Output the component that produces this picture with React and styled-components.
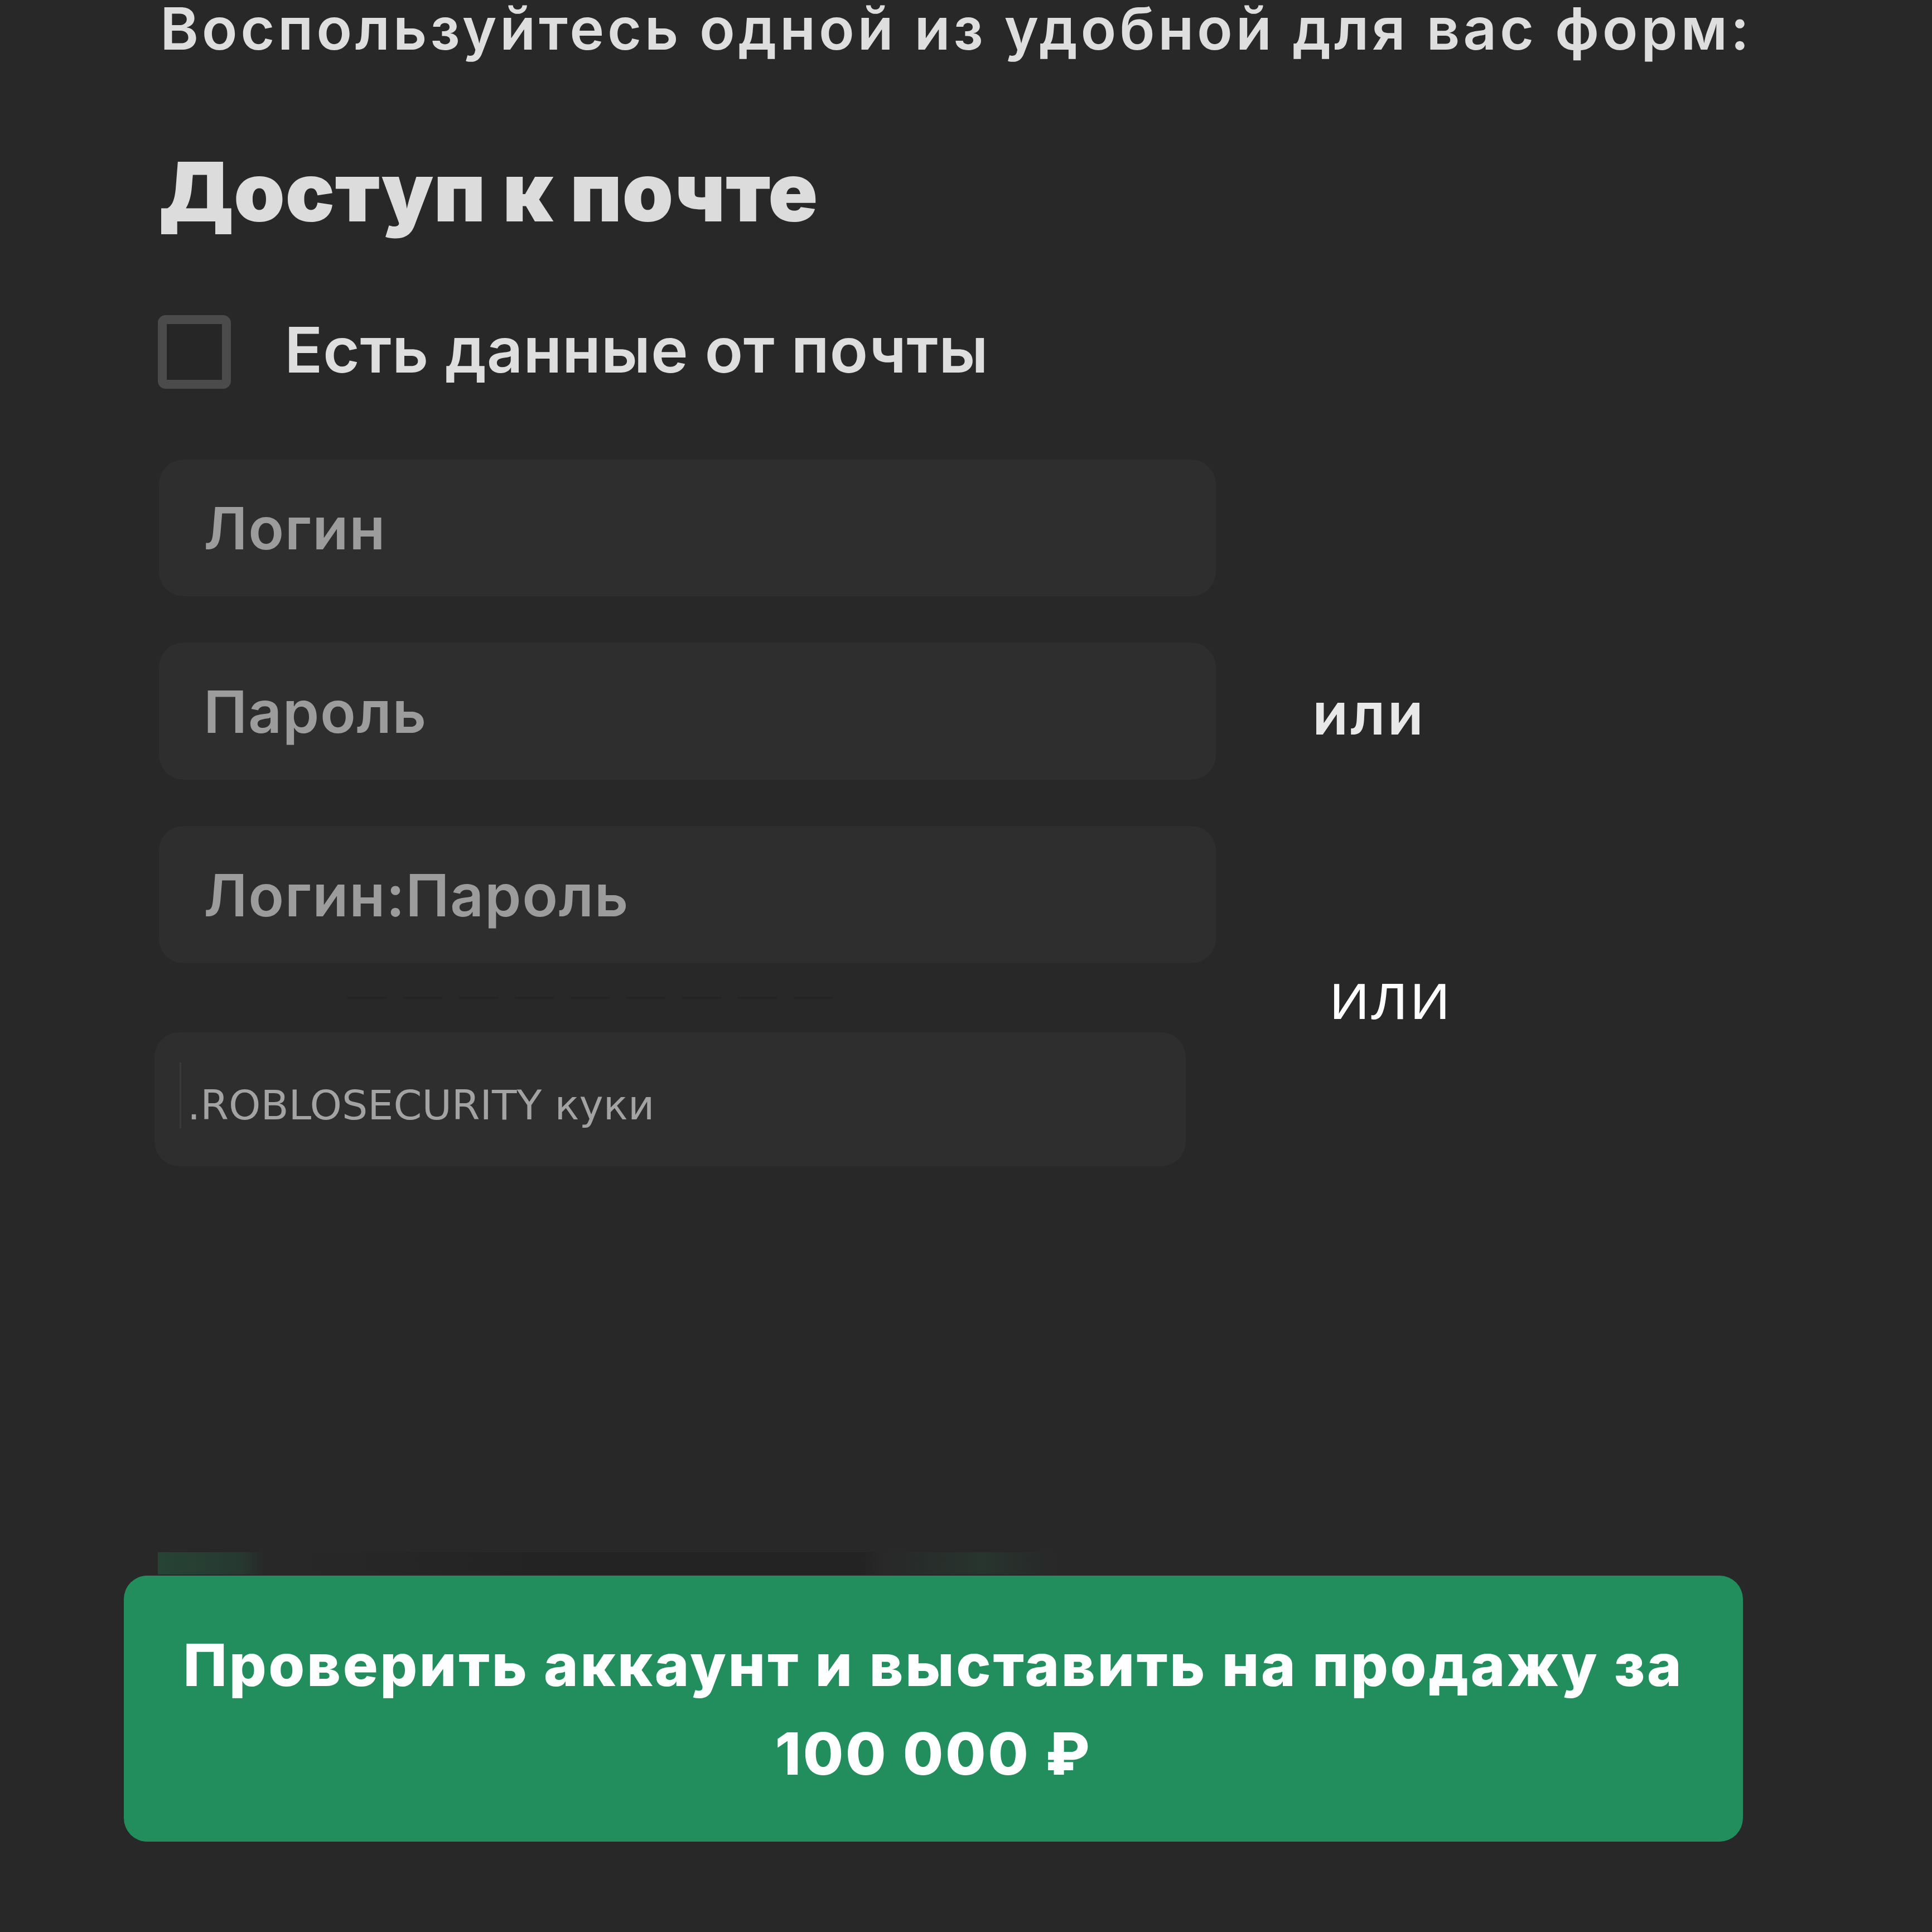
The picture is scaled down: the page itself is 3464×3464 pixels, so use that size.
import React from "react";
import styled, { createGlobalStyle } from "styled-components";

const GlobalStyle = createGlobalStyle`
  html, body {
    margin: 0;
    padding: 0;
    background: #282828;
  }
  * { box-sizing: border-box; }
`;

const Page = styled.div`
  width: 3464px;
  height: 3464px;
  overflow: hidden;
  background: #282828;
  font-family: Inter, "Noto Sans", sans-serif;
  position: relative;
`;

const Content = styled.div`
  display: flex;
  flex-direction: column;
  padding-left: 285px;
`;

const Intro = styled.div`
  margin: -2px 0 0 2px;
  font-size: 105px;
  line-height: 1;
  font-weight: 600;
  color: #dedede;
  white-space: nowrap;
  letter-spacing: 5.6px;
`;

const Title = styled.h2`
  margin: 167px 0 0 0;
  font-size: 147px;
  line-height: 1;
  font-weight: 900;
  color: #dcdcdc;
  letter-spacing: 0.4px;
  white-space: nowrap;
`;

const CheckRow = styled.label`
  display: flex;
  align-items: center;
  gap: 96px;
  margin-top: 148px;
  margin-left: -2px;
`;

const Box = styled.span`
  width: 131px;
  height: 132px;
  border: 16px solid #4b4b4b;
  border-radius: 14px;
  background: #262626;
  flex: none;
`;

const CheckText = styled.span`
  font-size: 113px;
  line-height: 1;
  font-weight: 600;
  color: #dedede;
  margin-top: -8px;
  letter-spacing: 0.6px;
  white-space: nowrap;
`;

const Row = styled.div`
  display: flex;
  align-items: center;
  margin-top: ${(p) => p.$mt}px;
  margin-left: ${(p) => p.$ml || 0}px;
  position: relative;
`;

const Field = styled.div`
  width: ${(p) => p.$w}px;
  height: ${(p) => p.$h}px;
  background: #2e2e2e;
  border-radius: 44px;
  display: flex;
  align-items: center;
  padding-left: ${(p) => p.$pl}px;
  flex: none;
  position: relative;
`;

const Placeholder = styled.span`
  font-size: 105px;
  line-height: 1;
  font-weight: 600;
  color: #9c9c9c;
  letter-spacing: 1.6px;
  white-space: nowrap;
`;

const CookieText = styled.span`
  font-family: "DejaVu Sans", Verdana, sans-serif;
  font-size: 73px;
  line-height: 1;
  font-weight: 400;
  color: #a3a3a3;
  margin-top: 20px;
  white-space: nowrap;
`;

const Caret = styled.span`
  position: absolute;
  left: 45px;
  top: 54px;
  width: 3px;
  height: 118px;
  background: #3a3a3a;
`;

const OrBold = styled.span`
  margin-left: 173px;
  margin-top: 6px;
  font-size: 105px;
  line-height: 1;
  font-weight: 600;
  color: #e8e8e8;
  letter-spacing: 4px;
`;

const Divider = styled.div`
  height: 124px;
  position: relative;
  display: flex;
`;

const Dashes = styled.div`
  position: absolute;
  left: 338px;
  top: 60px;
  width: 900px;
  height: 4px;
  background: repeating-linear-gradient(
    90deg,
    #232323 0 70px,
    transparent 70px 100px
  );
  opacity: 0.8;
`;

const OrThin = styled.span`
  margin-left: 2097px;
  margin-top: -4px;
  font-family: "Open Sans", "Noto Sans", sans-serif;
  font-size: 118px;
  line-height: 1;
  font-weight: 400;
  color: #ffffff;
  letter-spacing: 1px;
`;

const Ghost = styled.div`
  position: absolute;
  left: 283px;
  top: 2783px;
  width: 1620px;
  height: 40px;
  background: linear-gradient(
    90deg,
    rgba(34, 120, 80, 0.35) 0px,
    rgba(34, 120, 80, 0.2) 150px,
    rgba(40, 40, 40, 0) 190px,
    rgba(30, 30, 30, 0.5) 730px,
    rgba(30, 30, 30, 0.5) 1260px,
    rgba(40, 40, 40, 0) 1300px,
    rgba(34, 120, 80, 0.15) 1480px,
    rgba(40, 40, 40, 0) 1610px
  );
`;

const SubmitButton = styled.button`
  position: absolute;
  left: 222px;
  top: 2825px;
  width: 2903px;
  height: 477px;
  border: none;
  border-radius: 42px;
  background: #228e5d;
  color: #ffffff;
  font-family: Inter, "Noto Sans", sans-serif;
  font-size: 105px;
  font-weight: 800;
  line-height: 159px;
  letter-spacing: 3.6px;
  text-align: center;
  padding: 0;
  display: flex;
  align-items: center;
  justify-content: center;
`;

export default function App() {
  return (
    <Page>
      <GlobalStyle />
      <Content>
        <Intro>Воспользуйтесь одной из удобной для вас форм:</Intro>
        <Title>Доступ к почте</Title>
        <CheckRow>
          <Box />
          <CheckText>Есть данные от почты</CheckText>
        </CheckRow>

        <Row $mt={127}>
          <Field $w={1895} $h={245} $pl={80}>
            <Placeholder>Логин</Placeholder>
          </Field>
        </Row>
        <Row $mt={83}>
          <Field $w={1895} $h={246} $pl={80}>
            <Placeholder>Пароль</Placeholder>
          </Field>
          <OrBold>или</OrBold>
        </Row>
        <Row $mt={83}>
          <Field $w={1895} $h={246} $pl={80}>
            <Placeholder>Логин:Пароль</Placeholder>
          </Field>
        </Row>
        <Divider>
          <Dashes />
          <OrThin>или</OrThin>
        </Divider>
        <Row $mt={0} $ml={-8}>
          <Field $w={1849} $h={240} $pl={59}>
            <Caret />
            <CookieText>.ROBLOSECURITY куки</CookieText>
          </Field>
        </Row>
      </Content>
      <Ghost />
      <SubmitButton>
        <span>
          Проверить аккаунт и выставить на продажу за
          <br />
          100 000 ₽
        </span>
      </SubmitButton>
    </Page>
  );
}
